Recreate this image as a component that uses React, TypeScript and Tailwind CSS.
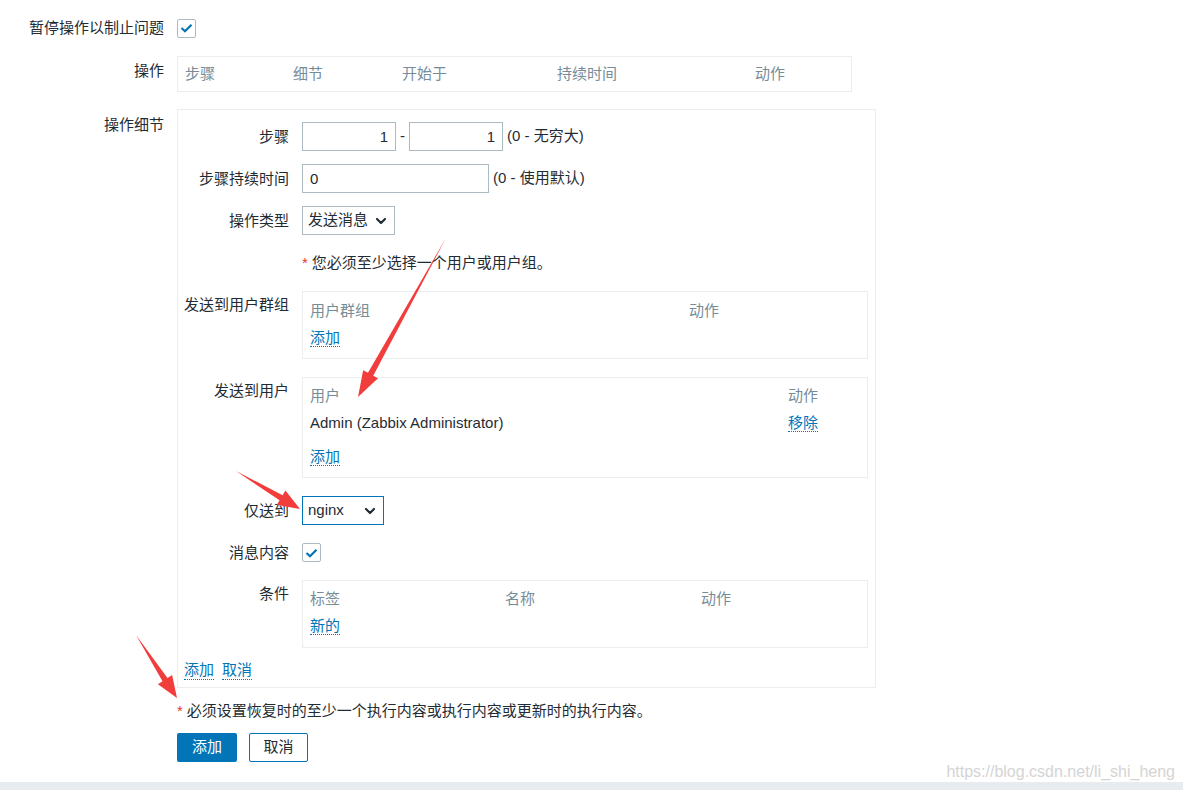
import React from "react";
import { ChevronDown } from "lucide-react";

const font = { fontFamily: '"Liberation Sans", Arial, "Noto Sans CJK SC", sans-serif' };

function arrow(x1: number, y1: number, x2: number, y2: number, headLen: number, headW: number, shaftW: number) {
  const len = Math.hypot(x2 - x1, y2 - y1);
  const dx = (x2 - x1) / len;
  const dy = (y2 - y1) / len;
  const nx = -dy;
  const ny = dx;
  const bx = x2 - dx * headLen;
  const by = y2 - dy * headLen;
  const pts = [
    [x1, y1],
    [bx + (nx * shaftW) / 2, by + (ny * shaftW) / 2],
    [bx + (nx * headW) / 2, by + (ny * headW) / 2],
    [x2, y2],
    [bx - (nx * headW) / 2, by - (ny * headW) / 2],
    [bx - (nx * shaftW) / 2, by - (ny * shaftW) / 2],
  ];
  return pts.map((p) => p.join(",")).join(" ");
}

function Check() {
  return (
    <div className="w-[19px] h-[19px] border border-[#acbbc2] rounded-[2px] bg-white flex items-center justify-center">
      <svg width="13" height="10" viewBox="0 0 13 10">
        <path d="M1.5 5 L5 8.2 L11.5 1.8" fill="none" stroke="#0275b8" strokeWidth="2.2" />
      </svg>
    </div>
  );
}

function Link({ children }: { children: React.ReactNode }) {
  return <span className="text-[#0275b8] border-b border-dotted border-[#0275b8] leading-[18px]">{children}</span>;
}

function Row({ label, children, labelPad = "", center = false }: { label: string; children: React.ReactNode; labelPad?: string; center?: boolean }) {
  return (
    <div className={`flex ${center ? "items-center" : "items-start"}`}>
      <div className={`w-[111px] text-right leading-[18px] shrink-0 ${labelPad}`}>{label}</div>
      <div className="ml-[13px] flex-1">{children}</div>
    </div>
  );
}

export default function App() {
  return (
    <div className="relative w-[1183px] h-[790px] bg-white text-[15px] text-[#1f2c33] flex flex-col overflow-hidden" style={font}>
      <div className="flex-1">
        {/* pause operations */}
        <div className="flex items-center pt-[18px]">
          <div className="w-[164px] text-right leading-[20px]">暂停操作以制止问题</div>
          <div className="ml-[13px]">
            <Check />
          </div>
        </div>

        {/* operations list */}
        <div className="flex items-start mt-[18px]">
          <div className="w-[164px] text-right leading-[18px] pt-[6px]">操作</div>
          <div className="ml-[13px] w-[675px] h-[36px] border border-[#ebeef0] px-[7px] pt-[8px] grid grid-cols-[108px_109px_155px_198px_1fr] text-[#768d99] leading-[18px]">
            <span>步骤</span>
            <span>细节</span>
            <span>开始于</span>
            <span>持续时间</span>
            <span>动作</span>
          </div>
        </div>

        {/* operation details */}
        <div className="flex items-start mt-[17px]">
          <div className="w-[164px] text-right leading-[18px] pt-[7px]">操作细节</div>
          <div className="ml-[13px] w-[699px] h-[579px] border border-[#ebeef0] pt-[12px] pr-[7px] flex flex-col">
            <Row label="步骤" center>
              <div className="flex items-center">
                <div className="w-[94px] h-[29px] border border-[#acbbc2] text-right pr-[7px] leading-[27px]">1</div>
                <span className="mx-[4px]">-</span>
                <div className="w-[94px] h-[29px] border border-[#acbbc2] text-right pr-[7px] leading-[27px]">1</div>
                <span className="ml-[4px]">(0 - 无穷大)</span>
              </div>
            </Row>
            <div className="mt-[13px]">
              <Row label="步骤持续时间" center>
                <div className="flex items-center">
                  <div className="w-[187px] h-[29px] border border-[#acbbc2] pl-[7px] leading-[27px]">0</div>
                  <span className="ml-[4px]">(0 - 使用默认)</span>
                </div>
              </Row>
            </div>
            <div className="mt-[13px]">
              <Row label="操作类型" center>
                <div className="w-[93px] h-[29px] border border-[#acbbc2] pl-[5px] pr-[5px] flex items-center justify-between">
                  <span>发送消息</span>
                  <ChevronDown size={16} strokeWidth={3.2} color="#1f2c33" />
                </div>
              </Row>
            </div>
            <div className="mt-[14px] h-[29px] flex items-center pl-[124px]">
              <span className="text-[#e33734] mr-[4px]">*</span>
              <span>您必须至少选择一个用户或用户组。</span>
            </div>

            <div className="mt-[13px]">
              <Row label="发送到用户群组" labelPad="pt-[5px]">
                <div className="h-[68px] border border-[#ebeef0] px-[7px] pt-[10px] leading-[18px]">
                  <div className="grid grid-cols-[379px_1fr] text-[#768d99]">
                    <span>用户群组</span>
                    <span>动作</span>
                  </div>
                  <div className="mt-[9px]">
                    <Link>添加</Link>
                  </div>
                </div>
              </Row>
            </div>

            <div className="mt-[18px]">
              <Row label="发送到用户" labelPad="pt-[5px]">
                <div className="h-[101px] border border-[#ebeef0] px-[7px] pt-[9px] leading-[18px]">
                  <div className="grid grid-cols-[478px_1fr] text-[#768d99]">
                    <span>用户</span>
                    <span>动作</span>
                  </div>
                  <div className="grid grid-cols-[478px_1fr] mt-[9px]">
                    <span>Admin (Zabbix Administrator)</span>
                    <span>
                      <Link>移除</Link>
                    </span>
                  </div>
                  <div className="mt-[16px]">
                    <Link>添加</Link>
                  </div>
                </div>
              </Row>
            </div>

            <div className="mt-[18px]">
              <Row label="仅送到" center>
                <div className="w-[82px] h-[29px] border border-[#0275b8] pl-[5px] pr-[5px] flex items-center justify-between">
                  <span>nginx</span>
                  <ChevronDown size={16} strokeWidth={3.2} color="#1f2c33" />
                </div>
              </Row>
            </div>

            <div className="mt-[13px] h-[29px]">
              <Row label="消息内容" center>
                <div className="h-[29px] flex items-center">
                  <Check />
                </div>
              </Row>
            </div>

            <div className="mt-[13px]">
              <Row label="条件" labelPad="pt-[5px]">
                <div className="h-[68px] border border-[#ebeef0] px-[7px] pt-[9px] leading-[18px]">
                  <div className="grid grid-cols-[195px_196px_1fr] text-[#768d99]">
                    <span>标签</span>
                    <span>名称</span>
                    <span>动作</span>
                  </div>
                  <div className="mt-[9px]">
                    <Link>新的</Link>
                  </div>
                </div>
              </Row>
            </div>

            <div className="mt-[13px] pl-[6px] flex gap-[8px]">
              <Link>添加</Link>
              <Link>取消</Link>
            </div>
          </div>
        </div>

        {/* warning */}
        <div className="ml-[177px] mt-[14px] leading-[18px] flex">
          <span className="text-[#e33734] mr-[4px]">*</span>
          <span>必须设置恢复时的至少一个执行内容或执行内容或更新时的执行内容。</span>
        </div>

        <div className="ml-[177px] mt-[13px] flex gap-[12px]">
          <button className="w-[60px] h-[29px] bg-[#0275b8] text-white rounded-[2px]">添加</button>
          <button className="w-[59px] h-[29px] border border-[#0275b8] text-[#1f2c33] rounded-[2px] bg-white">取消</button>
        </div>
      </div>

      <div className="h-[8px] bg-[#e9ecef]" />

      <div className="absolute right-[8px] bottom-[9px] text-[16px] text-[#d4d4d4] leading-[18px]" style={font}>
        https://blog.csdn.net/li_shi_heng
      </div>

      <svg className="absolute inset-0 pointer-events-none" width="1183" height="790">
        <polygon points={arrow(446, 238, 358, 397, 26, 17, 6)} fill="#f23d3d" />
        <polygon points={arrow(236, 471, 300, 509, 22, 17, 6)} fill="#f23d3d" />
        <polygon points={arrow(136, 635, 177, 698, 22, 17, 6)} fill="#f23d3d" />
      </svg>
    </div>
  );
}
